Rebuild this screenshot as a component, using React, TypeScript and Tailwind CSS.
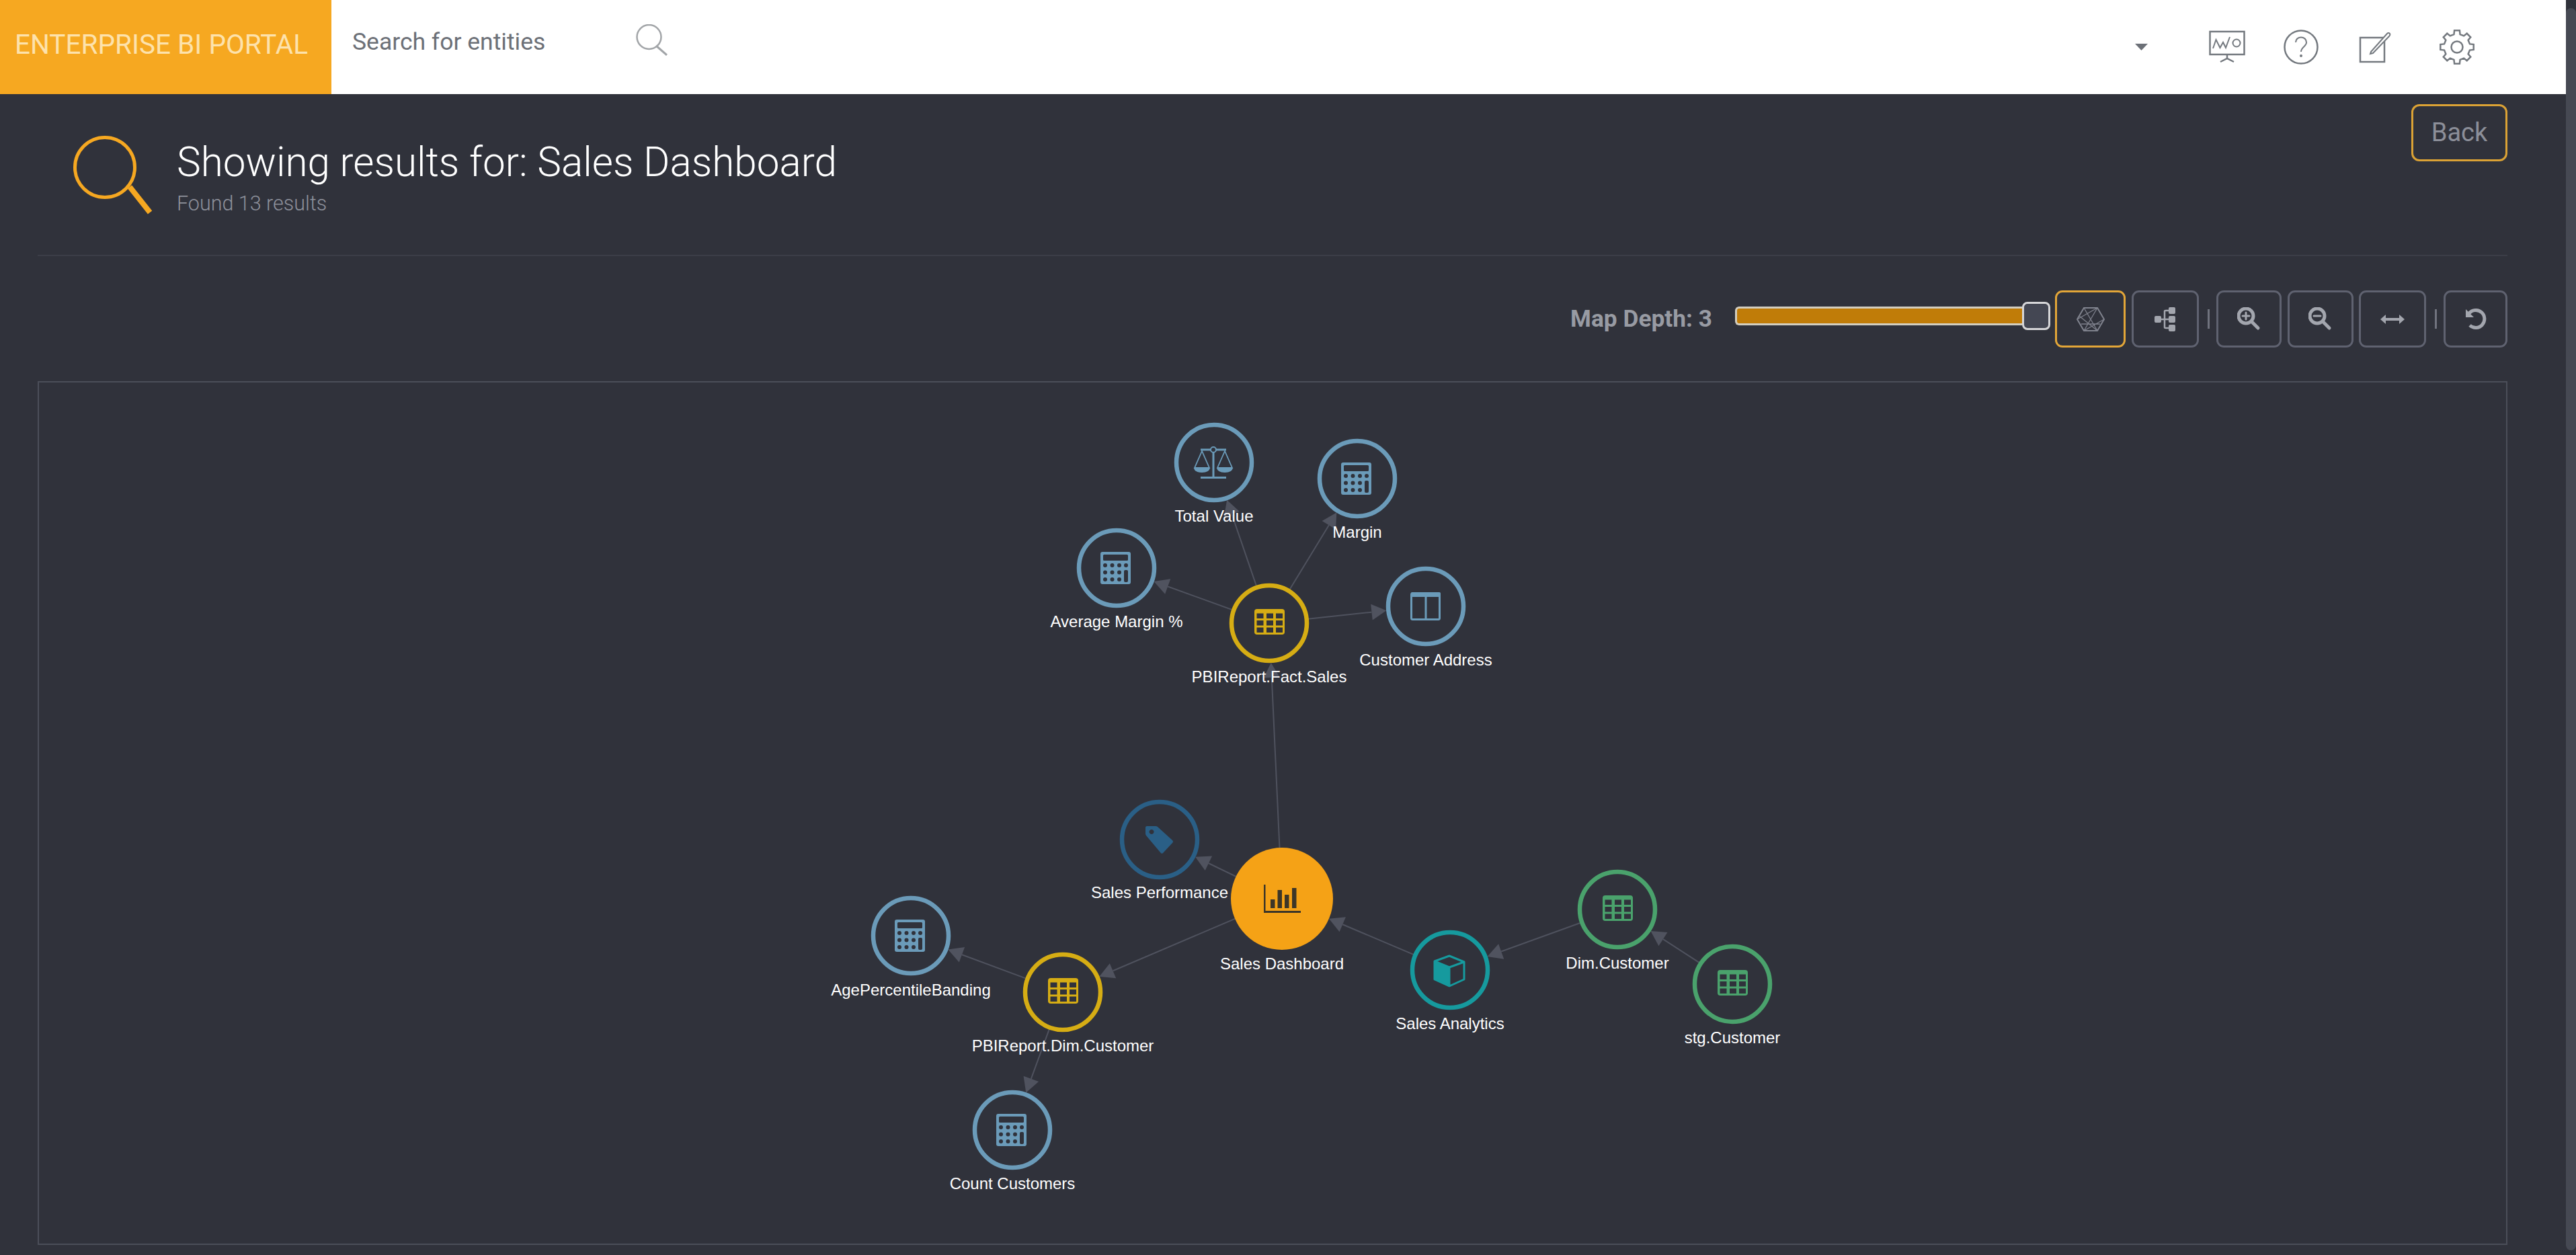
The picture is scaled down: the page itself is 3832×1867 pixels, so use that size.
import { ReactNode } from "react";

type NodeKind = "calc" | "scale" | "table" | "columns" | "tag" | "bars" | "cube";

type GraphNode = {
  id: string;
  label: string;
  x: number;
  y: number;
  color: string;
  kind: NodeKind;
  labelY: number;
};

const BG = "#30323b";

const nodes: GraphNode[] = [
  { id: "total", label: "Total Value", x: 1806, y: 688, color: "#6b9bb9", kind: "scale", labelY: 768 },
  { id: "margin", label: "Margin", x: 2019, y: 712, color: "#6b9bb9", kind: "calc", labelY: 792 },
  { id: "avg", label: "Average Margin %", x: 1661, y: 845, color: "#6b9bb9", kind: "calc", labelY: 925 },
  { id: "fact", label: "PBIReport.Fact.Sales", x: 1888, y: 927, color: "#d6ad14", kind: "table", labelY: 1007 },
  { id: "addr", label: "Customer Address", x: 2121, y: 902, color: "#6b9bb9", kind: "columns", labelY: 982 },
  { id: "perf", label: "Sales Performance", x: 1725, y: 1249, color: "#2a5f86", kind: "tag", labelY: 1328 },
  { id: "dash", label: "Sales Dashboard", x: 1907, y: 1337, color: "#f5a216", kind: "bars", labelY: 1434 },
  { id: "age", label: "AgePercentileBanding", x: 1355, y: 1392, color: "#6b9bb9", kind: "calc", labelY: 1473 },
  { id: "dim", label: "PBIReport.Dim.Customer", x: 1581, y: 1476, color: "#d6ad14", kind: "table", labelY: 1556 },
  { id: "count", label: "Count Customers", x: 1506, y: 1681, color: "#6b9bb9", kind: "calc", labelY: 1761 },
  { id: "analytics", label: "Sales Analytics", x: 2157, y: 1443, color: "#169a9e", kind: "cube", labelY: 1523 },
  { id: "dimc", label: "Dim.Customer", x: 2406, y: 1353, color: "#4aa26c", kind: "table", labelY: 1433 },
  { id: "stg", label: "stg.Customer", x: 2577, y: 1464, color: "#4aa26c", kind: "table", labelY: 1544 },
];

const edges: [string, string][] = [
  ["fact", "total"],
  ["fact", "margin"],
  ["fact", "avg"],
  ["fact", "addr"],
  ["dash", "fact"],
  ["dash", "perf"],
  ["dash", "dim"],
  ["dim", "age"],
  ["dim", "count"],
  ["analytics", "dash"],
  ["dimc", "analytics"],
  ["stg", "dimc"],
];

const radius = (n: GraphNode) => (n.id === "dash" ? 76 : 59);

function Calculator({ c }: { c: string }) {
  const dots = [
    [7, 20], [17.5, 20], [28, 20], [38, 20],
    [7, 30.5], [17.5, 30.5], [28, 30.5],
    [7, 41], [17.5, 41], [28, 41],
  ];
  return (
    <g transform="translate(-24,-24)">
      <rect width="45" height="48" rx="3" fill={c} />
      <rect x="4" y="4" width="37" height="9" rx="1.5" fill={BG} />
      {dots.map(([x, y]) => (
        <circle key={`${x}-${y}`} cx={x} cy={y} r="3" fill={BG} />
      ))}
      <rect x="35" y="27" width="6" height="18" rx="2" fill={BG} />
    </g>
  );
}

function TableIcon({ c }: { c: string }) {
  const cols = [3.5, 18, 32];
  const rows = [6.5, 17, 27.5];
  return (
    <g transform="translate(-22,-21)">
      <rect width="45" height="38" rx="4" fill={c} />
      {rows.map((y) =>
        cols.map((x) => <rect key={`${x}-${y}`} x={x} y={y} width="10" height="7.5" fill={BG} />)
      )}
    </g>
  );
}

function NodeIcon({ kind, c }: { kind: NodeKind; c: string }) {
  if (kind === "calc") return <Calculator c={c} />;
  if (kind === "table") return <TableIcon c={c} />;
  if (kind === "scale") {
    return (
      <g>
        <rect x="-20" y="-20.5" width="38" height="3" fill={c} />
        <rect x="-2.5" y="-18" width="3" height="39" fill={c} />
        <rect x="-20" y="21" width="38" height="3" fill={c} />
        <circle cx="-1" cy="-19" r="4" fill={BG} stroke={c} strokeWidth="2" />
        <path d="M-18,-17 L-29,8 L-7,8 Z" fill="none" stroke={c} strokeWidth="1.8" />
        <path d="M-30,8 L-6,8 Q-7,15 -18,15 Q-29,15 -30,8 Z" fill={c} />
        <path d="M16,-17 L5,8 L27,8 Z" fill="none" stroke={c} strokeWidth="1.8" />
        <path d="M4,8 L28,8 Q27,15 16,15 Q5,15 4,8 Z" fill={c} />
      </g>
    );
  }
  if (kind === "columns") {
    return (
      <g>
        <rect x="-21.5" y="-19.5" width="42" height="39" rx="2" fill="none" stroke={c} strokeWidth="3" />
        <rect x="-22" y="-21" width="44" height="7" rx="2" fill={c} />
        <rect x="-1.5" y="-20" width="3" height="40" fill={c} />
      </g>
    );
  }
  if (kind === "tag") {
    return (
      <path
        fillRule="evenodd"
        d="M-19,-20 L-6,-20 Q-4,-20 -3,-19 L19,1 Q21,3 19,5 L5,20 Q3,22 1,19 L-20,-6 Q-21,-7 -21,-9 L-21,-18 Q-21,-20 -19,-20 Z M-12,-15 A3.5,3.5 0 1 0 -11.9,-15 Z"
        fill={c}
      />
    );
  }
  if (kind === "bars") {
    const ink = "#3d3628";
    return (
      <g fill={ink}>
        <rect x="-27" y="-21" width="2.5" height="41" />
        <rect x="-27" y="18" width="55" height="3" />
        <rect x="-17" y="1" width="6.5" height="13" />
        <rect x="-6.5" y="-13" width="6.5" height="27" />
        <rect x="4" y="-6" width="6.5" height="20" />
        <rect x="15" y="-16" width="6.5" height="30" />
      </g>
    );
  }
  return (
    <g>
      <path d="M-23,-13 L-1,-4 L-1,24 L-23,14 Z" fill={c} />
      <path
        d="M-1,-21 L21,-12 L21,14 L-1,24 L-23,14 L-23,-13 Z M-23,-13 L-1,-4 L21,-12 M-1,-4 L-1,24"
        fill="none"
        stroke={c}
        strokeWidth="3"
        strokeLinejoin="round"
      />
    </g>
  );
}

function Graph() {
  const byId = Object.fromEntries(nodes.map((n) => [n.id, n]));
  return (
    <svg viewBox="58 569 3670 1281" className="block h-full w-full">
      {edges.map(([from, to]) => {
        const s = byId[from];
        const t = byId[to];
        const dx = t.x - s.x;
        const dy = t.y - s.y;
        const len = Math.hypot(dx, dy);
        const ux = dx / len;
        const uy = dy / len;
        const tipX = t.x - ux * radius(t);
        const tipY = t.y - uy * radius(t);
        const baseX = tipX - ux * 22;
        const baseY = tipY - uy * 22;
        const pts = [
          `${tipX},${tipY}`,
          `${baseX - uy * 12},${baseY + ux * 12}`,
          `${baseX + uy * 12},${baseY - ux * 12}`,
        ].join(" ");
        return (
          <g key={`${from}-${to}`}>
            <line x1={s.x} y1={s.y} x2={baseX} y2={baseY} stroke="#4f525e" strokeWidth="2" />
            <polygon points={pts} fill="#50535f" />
          </g>
        );
      })}
      {nodes.map((n) => (
        <g key={n.id}>
          <g transform={`translate(${n.x},${n.y})`}>
            {n.id === "dash" ? (
              <circle r="76" fill={n.color} />
            ) : (
              <circle r="56" fill={BG} stroke={n.color} strokeWidth="6.5" />
            )}
            <NodeIcon kind={n.kind} c={n.color} />
          </g>
          <text
            x={n.x}
            y={n.labelY + 8}
            textAnchor="middle"
            fill="#ffffff"
            fontSize="24"
            fontFamily="'Liberation Sans', Arial, sans-serif"
          >
            {n.label}
          </text>
        </g>
      ))}
    </svg>
  );
}

function gearPath(cx: number, cy: number, outer: number, inner: number, teeth: number) {
  const pts: string[] = [];
  const step = (Math.PI * 2) / teeth;
  for (let i = 0; i < teeth; i++) {
    const a = i * step - Math.PI / 2;
    const w = step * 0.2;
    const w2 = step * 0.3;
    const p = (r: number, ang: number) => `${cx + r * Math.cos(ang)},${cy + r * Math.sin(ang)}`;
    pts.push(p(inner, a - w2), p(outer, a - w), p(outer, a + w), p(inner, a + w2));
  }
  return `M${pts.join(" L")} Z`;
}

function ToolButton({
  children,
  active,
  className,
}: {
  children: ReactNode;
  active?: boolean;
  className: string;
}) {
  return (
    <button
      className={`flex h-[85px] items-center justify-center rounded-[11px] border-[3px] ${
        active ? "border-[#e3a638]" : "border-[#5f6270]"
      } ${className}`}
    >
      {children}
    </button>
  );
}

const Sep = ({ className }: { className: string }) => (
  <div className={`h-[29px] w-[3px] bg-[#70737e] ${className}`} />
);

export default function App() {
  return (
    <div className="flex h-[1867px] w-[3832px] overflow-hidden bg-[#30323b] font-['Roboto',sans-serif]">
      <div className="flex min-w-0 flex-1 flex-col">
        <header className="flex h-[140px] items-center bg-white">
          <div className="flex h-full w-[493px] items-center bg-[#f6a821] pb-[8px] pl-[22px] text-[40.5px] font-normal text-[#fde2ac]">
            ENTERPRISE BI PORTAL
          </div>
          <div className="ml-[31px] w-[421px] pb-[15px] text-[35.5px] text-[#6c7077]">Search for entities</div>
          <svg width="48" height="47" viewBox="0 0 48 47" className="mb-[22px]" fill="none" stroke="#a2a5a8">
            <circle cx="20.5" cy="19" r="18" strokeWidth="2.5" />
            <line x1="31" y1="32" x2="47" y2="46" strokeWidth="3" />
          </svg>
          <div className="ml-auto flex items-center pr-[135px]">
            <svg width="19" height="10" viewBox="0 0 19 10">
              <polygon points="0,0 19,0 9.5,10" fill="#6c7077" />
            </svg>
            <svg width="56" height="50" viewBox="3285 45 56 50" className="ml-[90px]" fill="none" stroke="#74797f" strokeWidth="2.5">
              <rect x="3287.5" y="47" width="51" height="34" />
              <path d="M3292,72 L3296.5,59 L3302.5,71 L3307,63 L3311,71 L3317,55" strokeWidth="2" />
              <circle cx="3327" cy="64" r="5.5" strokeWidth="2" />
              <path d="M3313,81 L3313,87 M3303,92 L3313,87 L3323,92" />
            </svg>
            <svg width="52" height="52" viewBox="0 0 52 52" className="ml-[56px]" fill="none" stroke="#74797f" strokeWidth="2.5">
              <circle cx="26" cy="26" r="24.5" />
              <path d="M18,19 C18,9 34,9 34,19 C34,25 26,26 26,33" strokeWidth="2" />
              <circle cx="26" cy="39" r="2" fill="#74797f" stroke="none" />
            </svg>
            <svg width="48" height="48" viewBox="0 0 48 48" className="ml-[60px]" fill="none" stroke="#74797f" strokeWidth="2.5">
              <rect x="2" y="10" width="36" height="36" />
              <path d="M18,31 L42,4 Q44,2 46,4 Q47,6 45,8 L21,33 L17,34 Z" fill="#fff" strokeWidth="2" />
            </svg>
            <svg width="54" height="54" viewBox="0 0 54 54" className="ml-[71px]" fill="none" stroke="#74797f" strokeWidth="2.5">
              <path d={gearPath(27, 27, 25, 19.5, 8)} />
              <circle cx="27" cy="27" r="8.5" />
            </svg>
          </div>
        </header>

        <main className="flex flex-1 flex-col pl-[56px] pr-[87px]">
          <section className="flex h-[241px] items-start justify-between border-b-2 border-[#3b3d48] pl-[53px] pt-[15px]">
            <div className="flex gap-[37px] pt-[47px]">
              <svg width="117" height="117" viewBox="0 0 117 117" fill="none" stroke="#f6a821">
                <circle cx="47" cy="47" r="44.5" strokeWidth="5" />
                <line x1="84" y1="76" x2="114" y2="114" strokeWidth="8" />
              </svg>
              <div className="pt-[5px]">
                <h1 className="text-[60.2px] font-light leading-[70px] text-white">Showing results for: Sales Dashboard</h1>
                <p className="mt-[6px] text-[30.5px] font-light leading-[40px] text-[#8e919b]">Found 13 results</p>
              </div>
            </div>
            <button className="flex h-[85px] w-[143px] items-center justify-center rounded-[12px] border-[3px] border-[#dba235] text-[38px] text-[#8c8f99]">
              Back
            </button>
          </section>

          <div className="mt-[51px] flex items-center justify-end">
            <span className="text-[35.3px] font-bold text-[#989ba3]">Map Depth: 3</span>
            <div className="mb-[10px] ml-[34px] flex w-[469px] items-center">
              <div className="h-[28px] flex-1 rounded-l-[6px] border-[3px] border-r-0 border-[#d3cebf] bg-[#c07c08]" />
              <div className="h-[42px] w-[42px] rounded-[8px] border-[3px] border-[#d6d6d8] bg-[#444753]" />
            </div>
            <ToolButton active className="ml-[7px] w-[105px]">
              <svg width="44" height="40" viewBox="-22 -20 44 40" fill="none" stroke="#80838e" strokeWidth="1.3">
                <path d="M-20,0 L-10,-17 L10,-17 L20,0 L10,17 L-10,17 Z" strokeWidth="2" />
                <path d="M-10,-17 L10,17 M10,-17 L-10,17 M-20,0 L10,-17 M-14,7 L14,7 M-17,-5 L10,17 M20,0 L-10,17" />
              </svg>
            </ToolButton>
            <ToolButton className="ml-[9px] w-[100px]">
              <svg width="32" height="36" viewBox="0 0 32 36" fill="none" stroke="#a3a6ae" strokeWidth="2.5">
                <path d="M10,18 L22,18 M15,6 L15,30 Q15,31 17,31 L22,31 M15,6 Q15,5 17,5 L22,5" />
                <rect x="0" y="13" width="10" height="10" rx="2" fill="#a3a6ae" stroke="none" />
                <rect x="21" y="0" width="10" height="10" rx="2" fill="#a3a6ae" stroke="none" />
                <rect x="21" y="13" width="10" height="10" rx="2" fill="#a3a6ae" stroke="none" />
                <rect x="21" y="26" width="10" height="10" rx="2" fill="#a3a6ae" stroke="none" />
              </svg>
            </ToolButton>
            <Sep className="ml-[13px]" />
            <ToolButton className="ml-[10px] w-[97px]">
              <svg width="36" height="36" viewBox="-16 -16 36 36" fill="none" stroke="#a3a6ae" strokeLinecap="round">
                <circle cx="-3" cy="-3" r="11" strokeWidth="5" />
                <line x1="6" y1="6" x2="15" y2="15" strokeWidth="5" />
                <path d="M-8,-3 L2,-3 M-3,-8 L-3,2" strokeWidth="3" />
              </svg>
            </ToolButton>
            <ToolButton className="ml-[9px] w-[98px]">
              <svg width="36" height="36" viewBox="-16 -16 36 36" fill="none" stroke="#a3a6ae" strokeLinecap="round">
                <circle cx="-3" cy="-3" r="11" strokeWidth="5" />
                <line x1="6" y1="6" x2="15" y2="15" strokeWidth="5" />
                <path d="M-8,-3 L2,-3" strokeWidth="3" />
              </svg>
            </ToolButton>
            <ToolButton className="ml-[8px] w-[100px]">
              <svg width="36" height="16" viewBox="-18 -8 36 16" fill="#a3a6ae">
                <rect x="-12" y="-2" width="24" height="4" />
                <polygon points="-18,0 -10,-7 -10,7" />
                <polygon points="18,0 10,-7 10,7" />
              </svg>
            </ToolButton>
            <Sep className="ml-[13px]" />
            <ToolButton className="ml-[10px] w-[95px]">
              <svg width="34" height="32" viewBox="-17 -15 34 32" fill="none" stroke="#a3a6ae" strokeWidth="5">
                <path d="M-10,-8 A13,13 0 1 1 -9,10" />
                <polygon points="-15,-14 -15,-2 -3,-2" fill="#a3a6ae" stroke="none" />
              </svg>
            </ToolButton>
          </div>

          <div className="mt-[50px] h-[1285px] border-2 border-[#4b4e59]">
            <Graph />
          </div>
        </main>
      </div>

      {/* fake scrollbar, the screenshot has one */}
      <div className="w-[15px] pb-[7px] pt-[12px]">
        <div className="h-full w-full rounded-full bg-[#464953]" />
      </div>
    </div>
  );
}
